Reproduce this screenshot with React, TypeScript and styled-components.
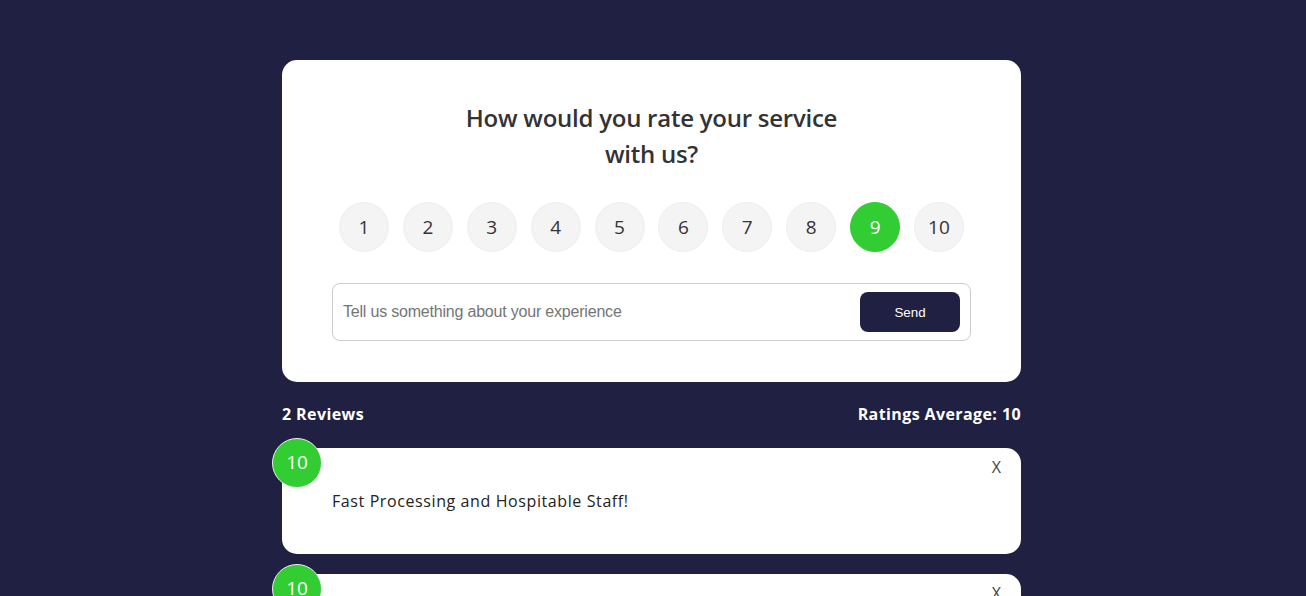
import React, { useState } from "react";
import styled, { createGlobalStyle } from "styled-components";

const GlobalStyle = createGlobalStyle`
  * { box-sizing: border-box; margin: 0; padding: 0; }
  html, body { background: #202142; }
  body {
    font-family: "Open Sans", "Noto Sans", sans-serif;
    line-height: 1.6;
    color: #fff;
    overflow: hidden;
  }
`;

const Header = styled.header`
  height: 60px;
`;

const Container = styled.div`
  width: 739px;
  margin-left: calc(50% - 371px);
`;

const Card = styled.div`
  position: relative;
  background: #fff;
  color: #333;
  border-radius: 15px;
  padding: 40px 50px;
  margin: 0 0 20px;
`;

const FormCard = styled(Card)`
  padding-bottom: 41px;
`;

const Title = styled.h2`
  font-size: 24px;
  font-weight: 600;
  line-height: 36px;
  text-align: center;
  color: #333;
  letter-spacing: -0.25px;
`;

const RatingList = styled.ul`
  list-style: none;
  display: flex;
  justify-content: space-around;
  align-items: center;
  margin: 30px 0 31px;
`;

const RatingItem = styled.li<{ $active: boolean }>`
  width: 50px;
  height: 50px;
  border-radius: 50%;
  display: flex;
  align-items: center;
  justify-content: center;
  font-size: 19px;
  font-weight: 400;
  border: 1px solid ${(p) => (p.$active ? "#32cd32" : "#eee")};
  background: ${(p) => (p.$active ? "#32cd32" : "#f4f4f4")};
  color: ${(p) => (p.$active ? "#fff" : "#333")};
  cursor: pointer;
`;

const InputGroup = styled.div`
  display: flex;
  align-items: center;
  border: 1px solid #ccc;
  border-radius: 8px;
  padding: 8px 10px;
`;

const TextInput = styled.input`
  flex-grow: 2;
  border: none;
  outline: none;
  font-family: "Liberation Sans", Arial, sans-serif;
  font-size: 16px;
  letter-spacing: -0.2px;
  color: #333;
  background: transparent;
  &::placeholder { color: #757575; }
`;

const SendButton = styled.button`
  width: 100px;
  height: 40px;
  border: 0;
  border-radius: 8px;
  background: #202142;
  color: #fff;
  font-family: "Liberation Sans", Arial, sans-serif;
  font-size: 13.33px;
  cursor: pointer;
`;

const Stats = styled.div`
  display: flex;
  justify-content: space-between;
  align-items: center;
  margin-bottom: 20px;
  font-size: 16px;
  font-weight: 700;
  letter-spacing: 0.4px;
  color: #fff;
`;

const ReviewCard = styled(Card)``;

const NumDisplay = styled.div`
  position: absolute;
  top: -10px;
  left: -10px;
  width: 50px;
  height: 50px;
  border-radius: 50%;
  background: #32cd32;
  border: 1px solid #eee;
  color: #fff;
  font-size: 19px;
  display: flex;
  align-items: center;
  justify-content: center;
`;

const CloseButton = styled.button`
  position: absolute;
  top: 8px;
  right: 20px;
  background: none;
  border: none;
  font-family: "Open Sans", sans-serif;
  font-size: 16px;
  color: #444;
  cursor: pointer;
`;

const ReviewText = styled.p`
  font-size: 16px;
  line-height: 26px;
  letter-spacing: 0.6px;
  color: #222;
`;

const reviews = [
  { id: 1, rating: 10, text: "Fast Processing and Hospitable Staff!" },
  { id: 2, rating: 10, text: "Great service overall." },
];

export default function App() {
  const [selected, setSelected] = useState(9);
  return (
    <>
      <GlobalStyle />
      <Header />
      <Container>
        <FormCard>
          <Title>
            How would you rate your service
            <br />
            with us?
          </Title>
          <RatingList>
            {Array.from({ length: 10 }, (_, i) => i + 1).map((n) => (
              <RatingItem key={n} $active={n === selected} onClick={() => setSelected(n)}>
                {n}
              </RatingItem>
            ))}
          </RatingList>
          <InputGroup>
            <TextInput type="text" placeholder="Tell us something about your experience" />
            <SendButton type="button">Send</SendButton>
          </InputGroup>
        </FormCard>
        <Stats>
          <span>2 Reviews</span>
          <span>Ratings Average: 10</span>
        </Stats>
        {reviews.map((r) => (
          <ReviewCard key={r.id}>
            <NumDisplay>{r.rating}</NumDisplay>
            <CloseButton type="button">X</CloseButton>
            <ReviewText>{r.text}</ReviewText>
          </ReviewCard>
        ))}
      </Container>
    </>
  );
}
